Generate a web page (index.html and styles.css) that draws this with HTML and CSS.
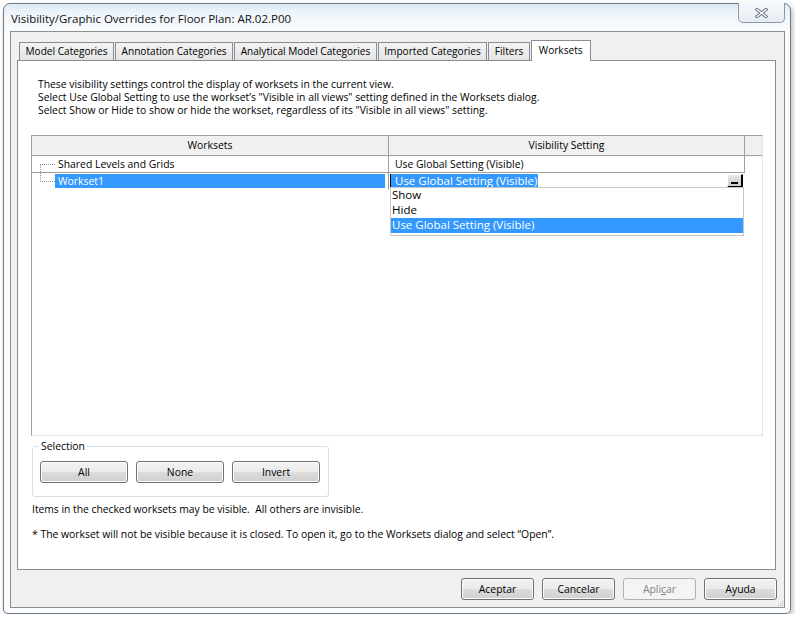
FILE: index.html
```html
<!DOCTYPE html>
<html lang="en">
<head>
    <meta charset="UTF-8">
    <title>Visibility/Graphic Overrides</title>
    <link rel="stylesheet" href="styles.css">
</head>
<body>
    <div class="window">
        <div class="titlebar">
            <span class="title">Visibility/Graphic Overrides for Floor Plan: AR.02.P00</span>
            <div class="close-btn">
                <svg width="13" height="10" viewBox="0 0 13 10">
                    <path d="M2 1.5 L11 8.5 M11 1.5 L2 8.5" stroke="#6d7888" stroke-width="3.4" stroke-linecap="square"/>
                    <path d="M2 1.5 L11 8.5 M11 1.5 L2 8.5" stroke="#ffffff" stroke-width="1.4" stroke-linecap="square"/>
                </svg>
            </div>
        </div>

        <div class="client">
            <div class="tabs">
                <div class="tab">Model Categories</div>
                <div class="tab">Annotation Categories</div>
                <div class="tab">Analytical Model Categories</div>
                <div class="tab">Imported Categories</div>
                <div class="tab">Filters</div>
                <div class="tab active">Worksets</div>
            </div>

            <div class="panel">
                <p class="intro">
                    These visibility settings control the display of worksets in the current view.<br>
                    Select Use Global Setting to use the workset’s "Visible in all views" setting defined in the Worksets dialog.<br>
                    Select Show or Hide to show or hide the workset, regardless of its "Visible in all views" setting.
                </p>

                <div class="grid">
                    <div class="grid-head">
                        <div class="col-a">Worksets</div>
                        <div class="col-b">Visibility Setting</div>
                        <div class="col-c"></div>
                    </div>

                    <div class="row">
                        <div class="col-a">
                            <span class="tree first"><i></i><i></i></span>
                            <span class="label">Shared Levels and Grids</span>
                        </div>
                        <div class="col-b">Use Global Setting (Visible)</div>
                    </div>

                    <div class="row current">
                        <div class="col-a">
                            <span class="tree last"><i></i><i></i></span>
                            <span class="label">Workset1</span>
                        </div>
                        <div class="col-b">
                            <span class="combo-text">Use Global Setting (Visible)</span>
                            <span class="combo-btn"><b></b></span>
                        </div>
                    </div>

                    <ul class="dropdown">
                        <li>Show</li>
                        <li>Hide</li>
                        <li class="hot">Use Global Setting (Visible)</li>
                    </ul>
                </div>

                <fieldset class="selection">
                    <legend>Selection</legend>
                    <button class="btn wide">All</button>
                    <button class="btn wide">None</button>
                    <button class="btn wide">Invert</button>
                </fieldset>

                <p class="note">Items in the checked worksets may be visible.&nbsp; All others are invisible.</p>
                <p class="note note-closed">* The workset will not be visible because it is closed. To open it, go to the Worksets dialog and select “Open”.</p>
            </div>

            <div class="footer">
                <button class="btn">Aceptar</button>
                <button class="btn">Cancelar</button>
                <button class="btn" disabled>Apli<u>c</u>ar</button>
                <button class="btn">Ayuda</button>
            </div>

            <svg class="grip" width="7" height="7" viewBox="0 0 7 7">
                <rect x="5" y="1" width="1" height="1" fill="#b9b9b9"/>
                <rect x="3" y="3" width="1" height="1" fill="#b9b9b9"/>
                <rect x="5" y="3" width="1" height="1" fill="#b9b9b9"/>
                <rect x="1" y="5" width="1" height="1" fill="#b9b9b9"/>
                <rect x="3" y="5" width="1" height="1" fill="#b9b9b9"/>
                <rect x="5" y="5" width="1" height="1" fill="#b9b9b9"/>
            </svg>
        </div>
    </div>
</body>
</html>
```
FILE: styles.css
```css
* {
    margin: 0;
    padding: 0;
    box-sizing: border-box;
}

body {
    background: #fff;
    font-family: 'Open Sans', 'Segoe UI', sans-serif;
    font-size: 10.4px;
    color: #000;
}

/* window frame */
.window {
    margin: 3px 0 0 3px;
    width: 788px;
    height: 611px;
    border: 1px solid #6f7a86;
    border-radius: 7px 7px 5px 5px;
    background: linear-gradient(to bottom, #dce9f5 0, #eef4fa 9px, #f9fbfd 24px, #fafbfc 100%);
    box-shadow: 2px 3px 6px rgba(0, 0, 0, 0.25);
    display: flex;
    flex-direction: column;
}

.titlebar {
    height: 27px;
    display: flex;
    align-items: flex-start;
}

.title {
    padding: 7px 0 0 7px;
    font-size: 11.5px;
    line-height: 15px;
    color: #111;
}

.close-btn {
    margin: -1px 5px 0 auto;
    width: 47px;
    height: 20px;
    border: 1px solid #8e99a6;
    border-top: none;
    border-radius: 0 0 5px 5px;
    background: linear-gradient(to bottom, #f6f9fb, #e6ecf2);
    display: flex;
    align-items: center;
    justify-content: center;
}

.client {
    flex: 1;
    margin: 0 5px 5px 6px;
    padding: 8px 8px 0 6px;
    background: #f0f0f0;
    border: 1px solid #8c8e90;
    display: flex;
    flex-direction: column;
    position: relative;
}

.grip {
    position: absolute;
    right: 0;
    bottom: 0;
}

/* tabs */
.tabs {
    height: 20px;
    padding-left: 2px;
    display: flex;
    align-items: flex-end;
}

.tab {
    height: 18px;
    margin-right: 1px;
    padding: 0 5.5px;
    border: 1px solid #898c95;
    border-bottom: none;
    background: linear-gradient(to bottom, #f3f3f3, #e4e4e4);
    font-size: 10.1px;
    line-height: 17px;
    white-space: nowrap;
}

.tab.active {
    height: 21px;
    margin-bottom: -1px;
    padding: 0 7px;
    background: #fff;
    position: relative;
    z-index: 1;
    line-height: 18px;
}

.panel {
    flex: 1;
    padding: 0 12px 0 13px;
    background: #fff;
    border: 1px solid #898c95;
}

.intro {
    margin-top: 17px;
    padding-left: 7px;
    font-size: 10.35px;
    line-height: 13px;
}

/* worksets grid */
.grid {
    margin-top: 18px;
    height: 301px;
    border: 1px solid #a0a0a0;
    border-right-color: #e3e3e3;
    border-bottom-color: #e3e3e3;
    position: relative;
}

.grid-head {
    height: 20px;
    display: flex;
    background: #f0f0f0;
    border-bottom: 1px solid #a0a0a0;
    line-height: 19px;
    text-align: center;
}

.col-a {
    width: 357px;
    border-right: 1px solid #a0a0a0;
}

.col-b {
    width: 356px;
    border-right: 1px solid #a0a0a0;
}

.col-c {
    flex: 1;
}

.row {
    height: 17px;
    display: flex;
    line-height: 16px;
}

.row .col-a,
.row .col-b {
    border-bottom: 1px solid #a0a0a0;
}

.row .col-a {
    display: flex;
}

.row .col-b {
    padding-left: 6px;
}

.tree {
    width: 15px;
    margin-left: 8px;
    display: flex;
    flex-direction: column;
}

.tree i {
    flex: 1;
}

.tree.first i:last-child {
    border-top: 1px dotted #9a9a9a;
    border-left: 1px dotted #9a9a9a;
}

.tree.last i:first-child {
    border-bottom: 1px dotted #9a9a9a;
    border-left: 1px dotted #9a9a9a;
}

.label {
    padding-left: 3px;
}

.row.current .col-a,
.row.current .col-b {
    border-bottom-color: transparent;
}

.row.current .col-b {
    border-right: none;
    width: 355px;
    padding-left: 1px;
    display: flex;
    align-items: center;
}

.row.current .label {
    flex: 1;
    margin: 1px 3px 1px 0;
    background: #3399ff;
    color: #fff;
    line-height: 15px;
}

.combo-text {
    height: 15px;
    padding: 0 1px 0 4px;
    border-left: 1px solid #000;
    background: #3399ff;
    color: #fff;
    font-size: 11.5px;
    line-height: 14px;
}

.combo-btn {
    margin-left: auto;
    margin-right: 1px;
    width: 16px;
    height: 14px;
    border: 1px solid #fff;
    border-right: 2px solid #000;
    border-bottom: 2px solid #000;
    background: linear-gradient(to bottom, #e6e6e6, #cfcfcf);
    display: flex;
    justify-content: center;
    align-items: flex-end;
}

.combo-btn b {
    width: 7px;
    height: 2px;
    margin-bottom: 2px;
    background: #000;
}

.dropdown {
    position: absolute;
    left: 358px;
    top: 51px;
    width: 354px;
    padding-bottom: 2px;
    list-style: none;
    background: #fff;
    border: 1px solid #c8c8c8;
    font-size: 11.5px;
    line-height: 15px;
}

.dropdown li {
    padding-left: 1px;
    line-height: 14px;
    height: 15px;
}

.dropdown .hot {
    background: #3399ff;
    color: #fff;
}

/* selection group */
.selection {
    margin: 3px 0 0 1px;
    width: 297px;
    padding: 8px 8px 13px 7px;
    border: 1px solid #d5dfe5;
    border-radius: 3px;
    display: flex;
    gap: 8px;
}

.selection legend {
    margin-left: -1px;
    padding: 0 2px;
    line-height: 14px;
}

.btn {
    width: 73px;
    height: 22px;
    border: 1px solid #707070;
    border-radius: 3px;
    background: linear-gradient(to bottom, #f2f2f2 0%, #ebebeb 50%, #dddddd 50%, #cfcfcf 100%);
    box-shadow: inset 0 0 0 1px #fcfcfc;
    font-family: inherit;
    font-size: 10.4px;
    color: #000;
}

.btn.wide {
    width: 88px;
}

.btn:disabled {
    border-color: #adb2b5;
    background: #f4f4f4;
    box-shadow: none;
    color: #838383;
}

.note {
    margin: 6px 0 0 1px;
    font-size: 10.3px;
    line-height: 13px;
}

.note-closed {
    margin-top: 12px;
    font-size: 10.4px;
}

.footer {
    height: 37px;
    margin-right: -1px;
    padding-top: 8px;
    display: flex;
    justify-content: flex-end;
    gap: 8px;
}
```
